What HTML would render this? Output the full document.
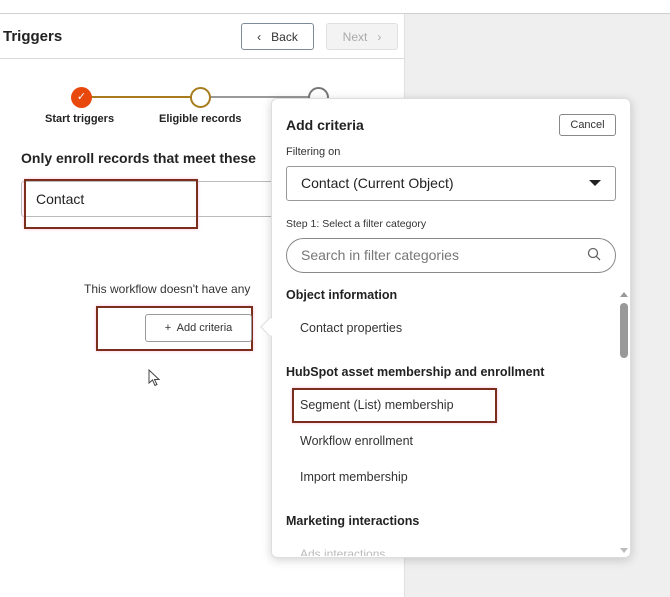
<!DOCTYPE html>
<html><head><meta charset="utf-8"><style>
*{box-sizing:border-box;margin:0;padding:0}
body{width:670px;height:597px;position:relative;overflow:hidden;background:#fff;font-family:"Liberation Sans",sans-serif;color:#33475b}
.abs{position:absolute}
.right{left:405px;top:14px;width:265px;height:583px;background:#efefef}
.topline{left:0;top:13px;width:670px;height:1px;background:#d0d0d0}
.hdrline{left:0;top:58px;width:405px;height:1px;background:#dcdcdc}
.vline{left:404px;top:14px;width:1px;height:583px;background:#e0e0e0}
.btn{border:1px solid #7c8a99;border-radius:3px;font-size:12px;display:flex;align-items:center;justify-content:center}
.red{border:2px solid #7a2e1c;box-shadow:0 0 3px #fbd;}
.pop{left:271px;top:98px;width:360px;height:460px;background:#fff;border-radius:6px;box-shadow:0 2px 10px rgba(0,0,0,.18);border:1px solid #ddd}
.t{position:absolute;white-space:nowrap}
</style></head><body>
<div class="abs topline"></div>
<div class="abs right"></div>
<div class="abs vline"></div>
<div class="abs hdrline"></div>
<div class="t" style="left:3px;top:28px;font-size:15px;font-weight:bold;color:#222">Triggers</div>
<div class="abs btn" style="left:241px;top:23px;width:73px;height:27px;color:#333">‹&nbsp;&nbsp; Back</div>
<div class="abs btn" style="left:326px;top:23px;width:72px;height:27px;border-color:#e0e0e0;background:#f3f3f3;color:#aaa">Next&nbsp;&nbsp; ›</div>
<div class="abs" style="left:82px;top:96px;width:118px;height:2px;background:#a87b1c"></div>
<div class="abs" style="left:200px;top:96px;width:118px;height:2px;background:#999"></div>
<div class="abs" style="left:71px;top:87px;width:21px;height:21px;border-radius:50%;background:#e8480c;color:#fff;font-size:11px;text-align:center;line-height:21px">✓</div>
<div class="abs" style="left:190px;top:87px;width:21px;height:21px;border-radius:50%;background:#fff;border:2px solid #a87b1c"></div>
<div class="abs" style="left:308px;top:87px;width:21px;height:21px;border-radius:50%;background:#fff;border:2px solid #777"></div>
<div class="t" style="left:45px;top:113px;font-size:11px;font-weight:bold;color:#222">Start triggers</div>
<div class="t" style="left:159px;top:113px;font-size:11px;font-weight:bold;color:#222">Eligible records</div>
<div class="t" style="left:21px;top:150px;font-size:14px;font-weight:bold;color:#222">Only enroll records that meet these</div>
<div class="abs" style="left:21px;top:181px;width:260px;height:36px;border:1px solid #bbb;border-radius:3px"></div>
<div class="abs red" style="left:24px;top:179px;width:174px;height:50px"></div>
<div class="t" style="left:36px;top:191px;font-size:14px;color:#222">Contact</div>
<div class="t" style="left:84px;top:282px;font-size:12px;color:#333">This workflow doesn't have any</div>
<div class="abs red" style="left:96px;top:306px;width:157px;height:45px"></div>
<div class="abs btn" style="left:145px;top:314px;width:107px;height:28px;color:#333;font-size:11px;border-color:#999">+&nbsp; Add criteria</div>
<svg class="abs" style="left:148px;top:369px" width="12" height="18" viewBox="0 0 12 18"><path d="M1 1L1 14L4.5 11L7 16.5L9 15.5L6.5 10.5L11 10.5Z" fill="#fff" stroke="#444" stroke-width="1"/></svg>
<div class="abs pop"></div>
<div class="abs" style="left:263px;top:320px;width:14px;height:14px;background:#fff;transform:rotate(45deg);border-left:1px solid #ddd;border-bottom:1px solid #ddd"></div>
<div class="t" style="left:286px;top:117px;font-size:14px;font-weight:bold;color:#222">Add criteria</div>
<div class="abs btn" style="left:559px;top:114px;width:57px;height:22px;font-size:11px;color:#333;border-color:#888">Cancel</div>
<div class="t" style="left:286px;top:146px;font-size:11px;color:#333">Filtering on</div>
<div class="abs" style="left:286px;top:166px;width:330px;height:35px;border:1px solid #999;border-radius:3px"></div>
<div class="t" style="left:301px;top:175px;font-size:14px;color:#222">Contact (Current Object)</div>
<div class="abs" style="left:589px;top:180px;width:0;height:0;border-left:6px solid transparent;border-right:6px solid transparent;border-top:6px solid #222"></div>
<div class="t" style="left:286px;top:218px;font-size:10.5px;color:#333">Step 1: Select a filter category</div>
<div class="abs" style="left:286px;top:238px;width:330px;height:35px;border:1px solid #888;border-radius:18px"></div>
<div class="t" style="left:301px;top:247px;font-size:14px;color:#777">Search in filter categories</div>
<svg class="abs" style="left:587px;top:247px" width="14" height="14" viewBox="0 0 14 14"><circle cx="6" cy="6" r="4.5" fill="none" stroke="#666" stroke-width="1.3"/><path d="M9.3 9.3L13 13" stroke="#666" stroke-width="1.3"/></svg>
<div class="t" style="left:286px;top:288px;font-size:12.5px;font-weight:bold;color:#222">Object information</div>
<div class="t" style="left:300px;top:321px;font-size:12.5px;color:#333">Contact properties</div>
<div class="t" style="left:286px;top:365px;font-size:12.5px;font-weight:bold;color:#222">HubSpot asset membership and enrollment</div>
<div class="abs red" style="left:292px;top:388px;width:205px;height:35px"></div>
<div class="t" style="left:300px;top:398px;font-size:12.5px;color:#333">Segment (List) membership</div>
<div class="t" style="left:300px;top:434px;font-size:12.5px;color:#333">Workflow enrollment</div>
<div class="t" style="left:300px;top:470px;font-size:12.5px;color:#333">Import membership</div>
<div class="t" style="left:286px;top:514px;font-size:12.5px;font-weight:bold;color:#222">Marketing interactions</div>
<div class="t" style="left:300px;top:547px;font-size:12px;color:#bbb;height:9px;overflow:hidden">Ads interactions</div>
<div class="abs" style="left:620px;top:292px;width:0;height:0;border-left:4px solid transparent;border-right:4px solid transparent;border-bottom:5px solid #999"></div>
<div class="abs" style="left:620px;top:303px;width:8px;height:55px;border-radius:4px;background:#999"></div>
<div class="abs" style="left:620px;top:548px;width:0;height:0;border-left:4px solid transparent;border-right:4px solid transparent;border-top:5px solid #bbb"></div>
</body></html>
